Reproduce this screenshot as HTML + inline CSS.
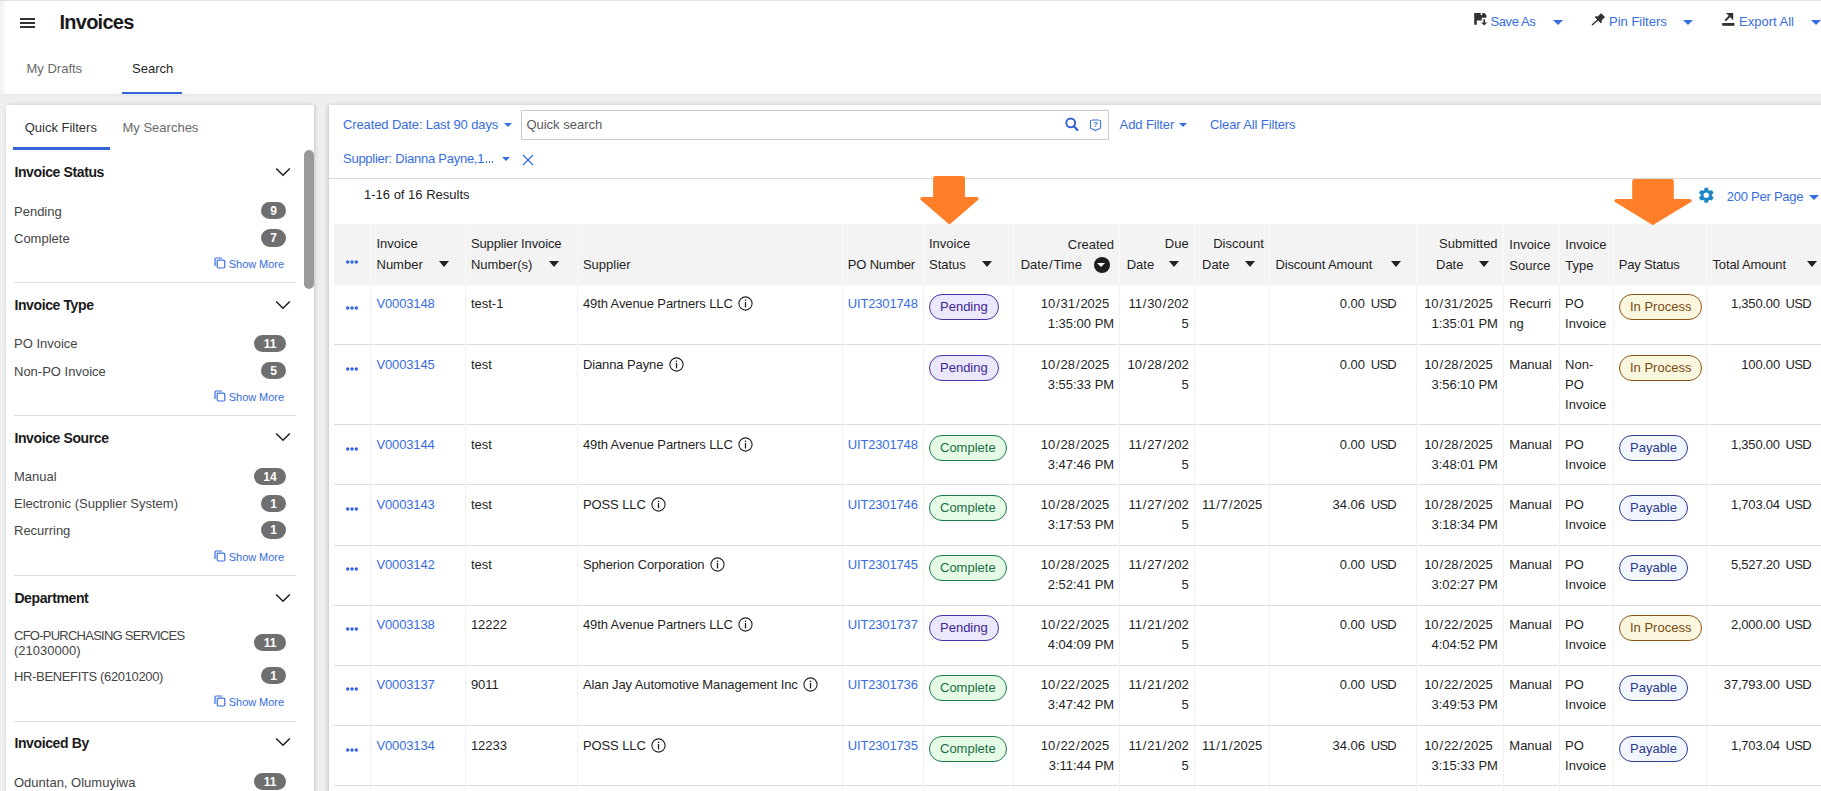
<!DOCTYPE html>
<html><head><meta charset="utf-8"><title>Invoices</title>
<style>
*{box-sizing:border-box;margin:0;padding:0}
html,body{width:1821px;height:791px;overflow:hidden;background:#fff}
body{position:relative;font-family:"Liberation Sans",sans-serif;font-size:13px;color:#1f1f1f}
.t{position:absolute;white-space:nowrap;line-height:20px}
.tri{position:absolute;width:0;height:0}
.abs{position:absolute}
.sl{margin:0 0.85px}
.badge{position:absolute;height:26px;border-radius:13px;border:1.2px solid;padding:0 10px;line-height:24px;font-size:13px;white-space:nowrap}
.pend{background:#ece8fb;border-color:#4a2fa6;color:#3e2796}
.comp{background:#e6fbe6;border-color:#1c7a4c;color:#1b6e48}
.proc{background:#fbf7df;border-color:#8a5416;color:#7a4a12}
.pay{background:#f1f5fd;border-color:#2d3b8e;color:#2d3b8e}
.cnt{position:absolute;height:17.5px;border-radius:9px;background:#6f6f6f;color:#fff;font-weight:bold;font-size:12px;line-height:19px;text-align:center}
.vl{position:absolute;width:1px}
.hl{position:absolute;height:1px}
</style></head><body>

<div class="hl" style="left:0;top:0;width:1821px;background:#e0e0e0"></div>
<div class="abs" style="left:0;top:94px;width:1821px;height:697px;background:#efefef"></div>
<div class="abs" style="left:0;top:94px;width:1821px;height:3px;background:linear-gradient(#e6e6e6,#efefef)"></div>
<div class="abs" style="left:0;top:1px;width:7px;height:790px;background:linear-gradient(90deg,#f0f0f0,rgba(255,255,255,0))"></div>
<div class="abs" style="left:20px;top:18px;width:15px;height:2px;background:#333"></div>
<div class="abs" style="left:20px;top:22px;width:15px;height:2px;background:#333"></div>
<div class="abs" style="left:20px;top:26px;width:15px;height:2px;background:#333"></div>
<div class="t " style="top:12.37px;left:59.50px;color:#1a1a1a;font-size:20px;font-weight:bold;letter-spacing:-0.75px;">Invoices</div>
<div class="t " style="top:58.50px;left:26.50px;color:#6a6a6a;">My Drafts</div>
<div class="t " style="top:58.50px;left:132.00px;color:#1f1f1f;">Search</div>
<div class="abs" style="left:122px;top:91.5px;width:60px;height:2.5px;background:#3466d8"></div>
<svg class="abs" style="left:1470px;top:8px" width="20" height="20" viewBox="0 0 20 20">
<path d="M4.2 5H14.4L16.4 7.2V9.7H11.7V12.5H6.8V16.7H4.2Z" fill="#333"/>
<rect x="10.7" y="5" width="1.6" height="2.1" fill="#fff"/>
<rect x="13.4" y="11.2" width="1.6" height="4" fill="#333"/>
<path d="M11.2 14.6H17.2L14.2 17.6Z" fill="#333"/></svg>
<div class="t " style="top:12.00px;left:1490.50px;color:#376ddf;letter-spacing:-0.4px;">Save As</div>
<div class="tri" style="left:1553px;top:20px;border-left:5.25px solid transparent;border-right:5.25px solid transparent;border-top:5px solid #376ddf;"></div>
<svg class="abs" style="left:1588px;top:8px" width="20" height="20" viewBox="0 0 20 20">
<path d="M13.2 5.2L17.2 9.2L16.2 9.8L13.6 12.4L13.9 14.6L12.8 15.2L6.8 9.2L7.4 8.2L9.6 8.5L12.2 5.9Z" fill="#333"/>
<path d="M10.2 11.6L4.4 16.8" stroke="#333" stroke-width="1.4" stroke-linecap="round"/></svg>
<div class="t " style="top:12.00px;left:1609.00px;color:#376ddf;">Pin Filters</div>
<div class="tri" style="left:1683px;top:20px;border-left:5.25px solid transparent;border-right:5.25px solid transparent;border-top:5px solid #376ddf;"></div>
<svg class="abs" style="left:1718px;top:8px" width="20" height="20" viewBox="0 0 20 20">
<rect x="4.2" y="15" width="12.2" height="2.8" fill="#333"/>
<path d="M8 5H15.2V12.2Z" fill="#333"/>
<path d="M7.2 12.6L11.6 8.2" stroke="#333" stroke-width="2"/></svg>
<div class="t " style="top:12.00px;left:1739.00px;color:#376ddf;">Export All</div>
<div class="tri" style="left:1810.5px;top:20px;border-left:5.25px solid transparent;border-right:5.25px solid transparent;border-top:5px solid #376ddf;"></div>
<div class="abs" style="left:6px;top:105px;width:308px;height:700px;background:#fff;box-shadow:1px 0 4px rgba(0,0,0,0.18)"></div>
<div class="t " style="top:117.50px;left:24.70px;color:#333;">Quick Filters</div>
<div class="t " style="top:117.50px;left:122.50px;color:#6a6a6a;">My Searches</div>
<div class="abs" style="left:13px;top:147px;width:97px;height:3px;background:#3466d8"></div>
<div class="abs" style="left:304px;top:150px;width:10px;height:138.5px;border-radius:5px;background:#9a9a9a"></div>
<div class="t " style="top:162.15px;left:14.40px;color:#1a1a1a;font-size:14px;font-weight:bold;letter-spacing:-0.38px;">Invoice Status</div>
<svg class="abs" style="left:275px;top:166.5px" width="16" height="10" viewBox="0 0 16 10"><path d="M1.2 1.5 L8 8.2 L14.8 1.5" fill="none" stroke="#222" stroke-width="1.6"/></svg>
<div class="t " style="top:202.00px;left:14.00px;color:#444;">Pending</div>
<div class="cnt" style="left:261px;top:201.95px;width:25px">9</div>
<div class="t " style="top:228.90px;left:14.00px;color:#444;">Complete</div>
<div class="cnt" style="left:261px;top:229.25px;width:25px">7</div>
<svg class="abs" style="left:214px;top:257px" width="12" height="12" viewBox="0 0 12 12"><path d="M1 9V2.2Q1 1 2.2 1H8" fill="none" stroke="#376ddf" stroke-width="1.2"/><rect x="3.2" y="3.2" width="7.6" height="7.8" rx="1.2" fill="none" stroke="#376ddf" stroke-width="1.2"/></svg>
<div class="t " style="top:254.19px;left:228.80px;color:#376ddf;font-size:11px;letter-spacing:-0.05px;">Show More</div>
<div class="hl" style="left:14px;top:282px;width:282px;background:#dedede"></div>
<div class="t " style="top:295.25px;left:14.40px;color:#1a1a1a;font-size:14px;font-weight:bold;letter-spacing:-0.38px;">Invoice Type</div>
<svg class="abs" style="left:275px;top:299.6px" width="16" height="10" viewBox="0 0 16 10"><path d="M1.2 1.5 L8 8.2 L14.8 1.5" fill="none" stroke="#222" stroke-width="1.6"/></svg>
<div class="t " style="top:334.20px;left:14.00px;color:#444;">PO Invoice</div>
<div class="cnt" style="left:254px;top:334.75px;width:32px">11</div>
<div class="t " style="top:361.50px;left:14.00px;color:#444;">Non-PO Invoice</div>
<div class="cnt" style="left:261px;top:361.75px;width:25px">5</div>
<svg class="abs" style="left:214px;top:390px" width="12" height="12" viewBox="0 0 12 12"><path d="M1 9V2.2Q1 1 2.2 1H8" fill="none" stroke="#376ddf" stroke-width="1.2"/><rect x="3.2" y="3.2" width="7.6" height="7.8" rx="1.2" fill="none" stroke="#376ddf" stroke-width="1.2"/></svg>
<div class="t " style="top:387.19px;left:228.80px;color:#376ddf;font-size:11px;letter-spacing:-0.05px;">Show More</div>
<div class="hl" style="left:14px;top:415px;width:282px;background:#dedede"></div>
<div class="t " style="top:427.75px;left:14.40px;color:#1a1a1a;font-size:14px;font-weight:bold;letter-spacing:-0.38px;">Invoice Source</div>
<svg class="abs" style="left:275px;top:432.1px" width="16" height="10" viewBox="0 0 16 10"><path d="M1.2 1.5 L8 8.2 L14.8 1.5" fill="none" stroke="#222" stroke-width="1.6"/></svg>
<div class="t " style="top:467.20px;left:14.00px;color:#444;">Manual</div>
<div class="cnt" style="left:254px;top:467.75px;width:32px">14</div>
<div class="t " style="top:494.40px;left:14.00px;color:#444;">Electronic (Supplier System)</div>
<div class="cnt" style="left:261px;top:494.75px;width:25px">1</div>
<div class="t " style="top:520.80px;left:14.00px;color:#444;">Recurring</div>
<div class="cnt" style="left:261px;top:521.25px;width:25px">1</div>
<svg class="abs" style="left:214px;top:550.2px" width="12" height="12" viewBox="0 0 12 12"><path d="M1 9V2.2Q1 1 2.2 1H8" fill="none" stroke="#376ddf" stroke-width="1.2"/><rect x="3.2" y="3.2" width="7.6" height="7.8" rx="1.2" fill="none" stroke="#376ddf" stroke-width="1.2"/></svg>
<div class="t " style="top:547.39px;left:228.80px;color:#376ddf;font-size:11px;letter-spacing:-0.05px;">Show More</div>
<div class="hl" style="left:14px;top:574.6px;width:282px;background:#dedede"></div>
<div class="t " style="top:588.15px;left:14.40px;color:#1a1a1a;font-size:14px;font-weight:bold;letter-spacing:-0.38px;">Department</div>
<svg class="abs" style="left:275px;top:592.5px" width="16" height="10" viewBox="0 0 16 10"><path d="M1.2 1.5 L8 8.2 L14.8 1.5" fill="none" stroke="#222" stroke-width="1.6"/></svg>
<div class="t " style="top:626.30px;left:14.00px;color:#444;letter-spacing:-0.75px;">CFO-PURCHASING SERVICES</div>
<div class="t " style="top:641.30px;left:14.00px;color:#444;">(21030000)</div>
<div class="cnt" style="left:254px;top:633.75px;width:32px">11</div>
<div class="t " style="top:667.10px;left:14.00px;color:#444;letter-spacing:-0.35px;">HR-BENEFITS (62010200)</div>
<div class="cnt" style="left:261px;top:666.75px;width:25px">1</div>
<svg class="abs" style="left:214px;top:695px" width="12" height="12" viewBox="0 0 12 12"><path d="M1 9V2.2Q1 1 2.2 1H8" fill="none" stroke="#376ddf" stroke-width="1.2"/><rect x="3.2" y="3.2" width="7.6" height="7.8" rx="1.2" fill="none" stroke="#376ddf" stroke-width="1.2"/></svg>
<div class="t " style="top:692.19px;left:228.80px;color:#376ddf;font-size:11px;letter-spacing:-0.05px;">Show More</div>
<div class="hl" style="left:14px;top:720.5px;width:282px;background:#dedede"></div>
<div class="t " style="top:732.85px;left:14.40px;color:#1a1a1a;font-size:14px;font-weight:bold;letter-spacing:-0.38px;">Invoiced By</div>
<svg class="abs" style="left:275px;top:737.2px" width="16" height="10" viewBox="0 0 16 10"><path d="M1.2 1.5 L8 8.2 L14.8 1.5" fill="none" stroke="#222" stroke-width="1.6"/></svg>
<div class="t " style="top:772.50px;left:14.00px;color:#444;">Oduntan, Olumuyiwa</div>
<div class="cnt" style="left:254px;top:772.75px;width:32px">11</div>
<div class="abs" style="left:329px;top:105px;width:1500px;height:700px;background:#fff;box-shadow:-1px 0 4px rgba(0,0,0,0.18)"></div>
<div class="t " style="top:114.80px;left:343.00px;color:#376ddf;letter-spacing:-0.12px;">Created Date: Last 90 days</div>
<div class="tri" style="left:503.5px;top:123px;border-left:4.0px solid transparent;border-right:4.0px solid transparent;border-top:4.5px solid #376ddf;"></div>
<div class="abs" style="left:521px;top:110px;width:588px;height:30px;border:1px solid #c9c9c9;background:#fff"></div>
<div class="t " style="top:114.80px;left:526.40px;color:#5a5a5a;">Quick search</div>
<svg class="abs" style="left:1064px;top:116px" width="15" height="16" viewBox="0 0 15 16"><circle cx="6.7" cy="6.9" r="4.4" fill="none" stroke="#2d5fd2" stroke-width="1.9"/><path d="M9.9 10.2L13.4 13.9" stroke="#2d5fd2" stroke-width="2.2" stroke-linecap="round"/></svg>
<svg class="abs" style="left:1089px;top:118.7px" width="13" height="13" viewBox="0 0 13 13"><path d="M1.4 2.4Q1.4 1.2 3 1.1Q6.5 0.8 10 1.1Q11.6 1.2 11.6 2.4V8.6Q11.6 9.4 10.6 9.8L7.2 11L6.5 11.8L5.8 11L2.4 9.8Q1.4 9.4 1.4 8.6Z" fill="none" stroke="#376ddf" stroke-width="1.05"/><text x="6.5" y="8.4" font-size="7.6" font-weight="bold" text-anchor="middle" fill="#376ddf" font-family="Liberation Sans">?</text></svg>
<div class="t " style="top:115.00px;left:1119.60px;color:#376ddf;letter-spacing:-0.1px;">Add Filter</div>
<div class="tri" style="left:1178.8px;top:122.8px;border-left:4.3px solid transparent;border-right:4.3px solid transparent;border-top:4.6px solid #376ddf;"></div>
<div class="t " style="top:115.00px;left:1210.00px;color:#376ddf;letter-spacing:-0.12px;">Clear All Filters</div>
<div class="t " style="top:148.50px;left:343.00px;color:#376ddf;letter-spacing:-0.26px;">Supplier: Dianna Payne,1</div>
<div class="abs" style="left:486px;top:161px;width:1.4px;height:1.6px;background:#376ddf"></div>
<div class="abs" style="left:489px;top:161px;width:1.4px;height:1.6px;background:#376ddf"></div>
<div class="abs" style="left:492px;top:161px;width:1.4px;height:1.6px;background:#376ddf"></div>
<div class="tri" style="left:502px;top:157px;border-left:4.0px solid transparent;border-right:4.0px solid transparent;border-top:4.5px solid #376ddf;"></div>
<svg class="abs" style="left:522px;top:154px" width="12" height="12" viewBox="0 0 12 12"><path d="M1 1L11 11M11 1L1 11" stroke="#376ddf" stroke-width="1.3"/></svg>
<div class="hl" style="left:329px;top:178px;width:1492px;background:#d9d9d9"></div>
<div class="t " style="top:185.00px;left:364.00px;color:#222;">1-16 of 16 Results</div>
<svg class="abs" style="left:1697.4px;top:186.2px" width="18.6" height="18.6" viewBox="0 0 24 24"><path fill="#1d86c6" d="M19.14 12.94c.04-.3.06-.61.06-.94 0-.32-.02-.64-.07-.94l2.03-1.58a.49.49 0 00.12-.61l-1.92-3.32a.488.488 0 00-.59-.22l-2.39.96c-.5-.38-1.03-.7-1.62-.94l-.36-2.54a.484.484 0 00-.48-.41h-3.84c-.24 0-.43.17-.47.41l-.36 2.54c-.59.24-1.13.57-1.62.94l-2.39-.96c-.22-.08-.47 0-.59.22L2.74 8.87c-.12.21-.08.47.12.61l2.03 1.58c-.05.3-.09.63-.09.94s.02.64.07.94l-2.03 1.58a.49.49 0 00-.12.61l1.92 3.32c.12.22.37.29.59.22l2.39-.96c.5.38 1.03.7 1.62.94l.36 2.54c.05.24.24.41.48.41h3.84c.24 0 .44-.17.47-.41l.36-2.54c.59-.24 1.13-.56 1.62-.94l2.39.96c.22.08.47 0 .59-.22l1.92-3.32c.12-.22.07-.47-.12-.61l-2.01-1.58zM12 15.6c-1.98 0-3.6-1.62-3.6-3.6s1.62-3.6 3.6-3.6 3.6 1.62 3.6 3.6-1.62 3.6-3.6 3.6z"/></svg>
<div class="t " style="top:186.50px;left:1726.80px;color:#376ddf;letter-spacing:-0.25px;">200 Per Page</div>
<div class="tri" style="left:1808.5px;top:195px;border-left:5.25px solid transparent;border-right:5.25px solid transparent;border-top:5px solid #376ddf;"></div>
<div class="abs" style="left:334px;top:224px;width:1487px;height:61px;background:#f3f3f3"></div>
<div class="hl" style="left:334px;top:344.0px;width:1487px;background:#dcdcdc"></div>
<div class="hl" style="left:334px;top:424.0px;width:1487px;background:#dcdcdc"></div>
<div class="hl" style="left:334px;top:484.0px;width:1487px;background:#dcdcdc"></div>
<div class="hl" style="left:334px;top:545.0px;width:1487px;background:#dcdcdc"></div>
<div class="hl" style="left:334px;top:605.0px;width:1487px;background:#dcdcdc"></div>
<div class="hl" style="left:334px;top:665.0px;width:1487px;background:#dcdcdc"></div>
<div class="hl" style="left:334px;top:725.0px;width:1487px;background:#dcdcdc"></div>
<div class="hl" style="left:334px;top:785.0px;width:1487px;background:#dcdcdc"></div>
<div class="vl" style="left:370px;top:224px;height:61px;background:#f9f9f9"></div>
<div class="vl" style="left:370px;top:285px;height:506px;background:#f1f1f1"></div>
<div class="vl" style="left:465px;top:224px;height:61px;background:#f9f9f9"></div>
<div class="vl" style="left:465px;top:285px;height:506px;background:#f1f1f1"></div>
<div class="vl" style="left:577px;top:224px;height:61px;background:#f9f9f9"></div>
<div class="vl" style="left:577px;top:285px;height:506px;background:#f1f1f1"></div>
<div class="vl" style="left:842px;top:224px;height:61px;background:#f9f9f9"></div>
<div class="vl" style="left:842px;top:285px;height:506px;background:#f1f1f1"></div>
<div class="vl" style="left:923px;top:224px;height:61px;background:#f9f9f9"></div>
<div class="vl" style="left:923px;top:285px;height:506px;background:#f1f1f1"></div>
<div class="vl" style="left:1013px;top:224px;height:61px;background:#f9f9f9"></div>
<div class="vl" style="left:1013px;top:285px;height:506px;background:#f1f1f1"></div>
<div class="vl" style="left:1119px;top:224px;height:61px;background:#f9f9f9"></div>
<div class="vl" style="left:1119px;top:285px;height:506px;background:#f1f1f1"></div>
<div class="vl" style="left:1194px;top:224px;height:61px;background:#f9f9f9"></div>
<div class="vl" style="left:1194px;top:285px;height:506px;background:#f1f1f1"></div>
<div class="vl" style="left:1269px;top:224px;height:61px;background:#f9f9f9"></div>
<div class="vl" style="left:1269px;top:285px;height:506px;background:#f1f1f1"></div>
<div class="vl" style="left:1416px;top:224px;height:61px;background:#f9f9f9"></div>
<div class="vl" style="left:1416px;top:285px;height:506px;background:#f1f1f1"></div>
<div class="vl" style="left:1503px;top:224px;height:61px;background:#f9f9f9"></div>
<div class="vl" style="left:1503px;top:285px;height:506px;background:#f1f1f1"></div>
<div class="vl" style="left:1559px;top:224px;height:61px;background:#f9f9f9"></div>
<div class="vl" style="left:1559px;top:285px;height:506px;background:#f1f1f1"></div>
<div class="vl" style="left:1613px;top:224px;height:61px;background:#f9f9f9"></div>
<div class="vl" style="left:1613px;top:285px;height:506px;background:#f1f1f1"></div>
<div class="vl" style="left:1706px;top:224px;height:61px;background:#f9f9f9"></div>
<div class="vl" style="left:1706px;top:285px;height:506px;background:#f1f1f1"></div>
<svg class="abs" style="left:345.4px;top:258.9px" width="14" height="6" viewBox="0 0 14 6"><circle cx="2.7" cy="3" r="1.75" fill="#3463dc"/><circle cx="7" cy="3" r="1.75" fill="#3463dc"/><circle cx="11.3" cy="3" r="1.75" fill="#3463dc"/></svg>
<div class="t " style="top:234.00px;left:376.50px;">Invoice</div>
<div class="t " style="top:255.00px;left:376.50px;">Number</div>
<div class="tri" style="left:438.7px;top:261px;border-left:5.25px solid transparent;border-right:5.25px solid transparent;border-top:6px solid #222;"></div>
<div class="t " style="top:234.00px;left:470.90px;letter-spacing:-0.12px;">Supplier Invoice</div>
<div class="t " style="top:255.00px;left:470.90px;">Number(s)</div>
<div class="tri" style="left:548.8px;top:261px;border-left:5.25px solid transparent;border-right:5.25px solid transparent;border-top:6px solid #222;"></div>
<div class="t " style="top:255.00px;left:582.90px;">Supplier</div>
<div class="t " style="top:255.00px;left:847.70px;letter-spacing:-0.15px;">PO Number</div>
<div class="t " style="top:234.00px;left:929.00px;">Invoice</div>
<div class="t " style="top:255.00px;left:929.00px;">Status</div>
<div class="tri" style="left:982.3px;top:261px;border-left:5.25px solid transparent;border-right:5.25px solid transparent;border-top:6px solid #222;"></div>
<div class="t " style="top:234.50px;right:707.00px;text-align:right;">Created</div>
<div class="t " style="top:255.00px;left:1020.70px;">Date<span class="sl">/</span>Time</div>
<div class="abs" style="left:1094px;top:257px;width:16px;height:16px;border-radius:8px;background:#1e1e1e"></div>
<div class="tri" style="left:1097.2px;top:262.8px;border-left:4.6px solid transparent;border-right:4.6px solid transparent;border-top:4.6px solid #fff;"></div>
<div class="t " style="top:234.00px;right:632.30px;text-align:right;">Due</div>
<div class="t " style="top:255.00px;left:1126.70px;">Date</div>
<div class="tri" style="left:1168.5px;top:261px;border-left:5.5px solid transparent;border-right:5.5px solid transparent;border-top:6px solid #222;"></div>
<div class="t " style="top:234.00px;right:557.20px;text-align:right;">Discount</div>
<div class="t " style="top:255.00px;left:1202.00px;">Date</div>
<div class="tri" style="left:1244.5px;top:261px;border-left:5.5px solid transparent;border-right:5.5px solid transparent;border-top:6px solid #222;"></div>
<div class="t " style="top:255.00px;left:1275.40px;letter-spacing:-0.1px;">Discount Amount</div>
<div class="tri" style="left:1391px;top:261px;border-left:5.5px solid transparent;border-right:5.5px solid transparent;border-top:6px solid #222;"></div>
<div class="t " style="top:234.00px;right:323.40px;text-align:right;">Submitted</div>
<div class="t " style="top:255.00px;left:1436.00px;">Date</div>
<div class="tri" style="left:1478.8px;top:261px;border-left:5.25px solid transparent;border-right:5.25px solid transparent;border-top:6px solid #222;"></div>
<div class="t " style="top:234.60px;left:1509.30px;">Invoice</div>
<div class="t " style="top:255.50px;left:1509.30px;">Source</div>
<div class="t " style="top:234.60px;left:1565.30px;">Invoice</div>
<div class="t " style="top:255.50px;left:1565.30px;">Type</div>
<div class="t " style="top:255.00px;left:1618.80px;letter-spacing:-0.2px;">Pay Status</div>
<div class="t " style="top:255.00px;left:1712.50px;letter-spacing:-0.15px;">Total Amount</div>
<div class="tri" style="left:1806.5px;top:261px;border-left:5.5px solid transparent;border-right:5.5px solid transparent;border-top:6px solid #222;"></div>
<svg class="abs" style="left:345.4px;top:304.9px" width="14" height="6" viewBox="0 0 14 6"><circle cx="2.7" cy="3" r="1.75" fill="#3463dc"/><circle cx="7" cy="3" r="1.75" fill="#3463dc"/><circle cx="11.3" cy="3" r="1.75" fill="#3463dc"/></svg>
<div class="t " style="top:294.00px;left:376.50px;color:#376ddf;letter-spacing:-0.15px;">V0003148</div>
<div class="t " style="top:294.00px;left:470.90px;">test-1</div>
<div class="t " style="top:294.00px;left:582.90px;letter-spacing:-0.1px;">49th Avenue Partners LLC<svg style="vertical-align:-3px;margin-left:5.5px" width="15" height="15" viewBox="0 0 15 15"><circle cx="7.5" cy="7.5" r="6.6" fill="none" stroke="#1f1f1f" stroke-width="1.1"/><rect x="6.85" y="3.6" width="1.3" height="1.4" fill="#1f1f1f"/><rect x="6.85" y="6" width="1.3" height="5.4" fill="#1f1f1f"/></svg></div>
<div class="t " style="top:294.00px;left:847.70px;color:#376ddf;letter-spacing:-0.15px;">UIT2301748</div>
<div class="badge pend" style="left:929px;top:294.0px">Pending</div>
<div class="t " style="top:294.00px;right:711.70px;text-align:right;">10<span class="sl">/</span>31<span class="sl">/</span>2025</div>
<div class="t " style="top:314.00px;right:706.80px;text-align:right;">1:35:00 PM</div>
<div class="t " style="top:294.00px;right:632.20px;text-align:right;">11<span class="sl">/</span>30<span class="sl">/</span>202</div>
<div class="t " style="top:314.00px;right:632.20px;text-align:right;">5</div>
<div class="t " style="top:294.00px;right:456.00px;text-align:right;">0.00</div>
<div class="t " style="top:294.00px;right:425.00px;text-align:right;letter-spacing:-0.75px;">USD</div>
<div class="t " style="top:294.00px;right:328.40px;text-align:right;">10<span class="sl">/</span>31<span class="sl">/</span>2025</div>
<div class="t " style="top:314.00px;right:323.10px;text-align:right;">1:35:01 PM</div>
<div class="t " style="top:294.00px;left:1509.30px;">Recurri</div>
<div class="t " style="top:314.00px;left:1509.30px;">ng</div>
<div class="t " style="top:294.00px;left:1565.10px;">PO</div>
<div class="t " style="top:314.00px;left:1565.10px;">Invoice</div>
<div class="badge proc" style="left:1619px;top:294.0px">In Process</div>
<div class="t " style="top:294.00px;right:41.10px;text-align:right;letter-spacing:-0.2px;">1,350.00</div>
<div class="t " style="top:294.00px;right:10.20px;text-align:right;letter-spacing:-0.75px;">USD</div>
<svg class="abs" style="left:345.4px;top:365.9px" width="14" height="6" viewBox="0 0 14 6"><circle cx="2.7" cy="3" r="1.75" fill="#3463dc"/><circle cx="7" cy="3" r="1.75" fill="#3463dc"/><circle cx="11.3" cy="3" r="1.75" fill="#3463dc"/></svg>
<div class="t " style="top:355.00px;left:376.50px;color:#376ddf;letter-spacing:-0.15px;">V0003145</div>
<div class="t " style="top:355.00px;left:470.90px;">test</div>
<div class="t " style="top:355.00px;left:582.90px;letter-spacing:-0.1px;">Dianna Payne<svg style="vertical-align:-3px;margin-left:5.5px" width="15" height="15" viewBox="0 0 15 15"><circle cx="7.5" cy="7.5" r="6.6" fill="none" stroke="#1f1f1f" stroke-width="1.1"/><rect x="6.85" y="3.6" width="1.3" height="1.4" fill="#1f1f1f"/><rect x="6.85" y="6" width="1.3" height="5.4" fill="#1f1f1f"/></svg></div>
<div class="badge pend" style="left:929px;top:355.0px">Pending</div>
<div class="t " style="top:355.00px;right:711.70px;text-align:right;">10<span class="sl">/</span>28<span class="sl">/</span>2025</div>
<div class="t " style="top:375.00px;right:706.80px;text-align:right;">3:55:33 PM</div>
<div class="t " style="top:355.00px;right:632.20px;text-align:right;">10<span class="sl">/</span>28<span class="sl">/</span>202</div>
<div class="t " style="top:375.00px;right:632.20px;text-align:right;">5</div>
<div class="t " style="top:355.00px;right:456.00px;text-align:right;">0.00</div>
<div class="t " style="top:355.00px;right:425.00px;text-align:right;letter-spacing:-0.75px;">USD</div>
<div class="t " style="top:355.00px;right:328.40px;text-align:right;">10<span class="sl">/</span>28<span class="sl">/</span>2025</div>
<div class="t " style="top:375.00px;right:323.10px;text-align:right;">3:56:10 PM</div>
<div class="t " style="top:355.00px;left:1509.30px;">Manual</div>
<div class="t " style="top:355.00px;left:1565.10px;">Non-</div>
<div class="t " style="top:375.00px;left:1565.10px;">PO</div>
<div class="t " style="top:395.00px;left:1565.10px;">Invoice</div>
<div class="badge proc" style="left:1619px;top:355.0px">In Process</div>
<div class="t " style="top:355.00px;right:41.10px;text-align:right;letter-spacing:-0.2px;">100.00</div>
<div class="t " style="top:355.00px;right:10.20px;text-align:right;letter-spacing:-0.75px;">USD</div>
<svg class="abs" style="left:345.4px;top:445.9px" width="14" height="6" viewBox="0 0 14 6"><circle cx="2.7" cy="3" r="1.75" fill="#3463dc"/><circle cx="7" cy="3" r="1.75" fill="#3463dc"/><circle cx="11.3" cy="3" r="1.75" fill="#3463dc"/></svg>
<div class="t " style="top:435.00px;left:376.50px;color:#376ddf;letter-spacing:-0.15px;">V0003144</div>
<div class="t " style="top:435.00px;left:470.90px;">test</div>
<div class="t " style="top:435.00px;left:582.90px;letter-spacing:-0.1px;">49th Avenue Partners LLC<svg style="vertical-align:-3px;margin-left:5.5px" width="15" height="15" viewBox="0 0 15 15"><circle cx="7.5" cy="7.5" r="6.6" fill="none" stroke="#1f1f1f" stroke-width="1.1"/><rect x="6.85" y="3.6" width="1.3" height="1.4" fill="#1f1f1f"/><rect x="6.85" y="6" width="1.3" height="5.4" fill="#1f1f1f"/></svg></div>
<div class="t " style="top:435.00px;left:847.70px;color:#376ddf;letter-spacing:-0.15px;">UIT2301748</div>
<div class="badge comp" style="left:929px;top:435.0px">Complete</div>
<div class="t " style="top:435.00px;right:711.70px;text-align:right;">10<span class="sl">/</span>28<span class="sl">/</span>2025</div>
<div class="t " style="top:455.00px;right:706.80px;text-align:right;">3:47:46 PM</div>
<div class="t " style="top:435.00px;right:632.20px;text-align:right;">11<span class="sl">/</span>27<span class="sl">/</span>202</div>
<div class="t " style="top:455.00px;right:632.20px;text-align:right;">5</div>
<div class="t " style="top:435.00px;right:456.00px;text-align:right;">0.00</div>
<div class="t " style="top:435.00px;right:425.00px;text-align:right;letter-spacing:-0.75px;">USD</div>
<div class="t " style="top:435.00px;right:328.40px;text-align:right;">10<span class="sl">/</span>28<span class="sl">/</span>2025</div>
<div class="t " style="top:455.00px;right:323.10px;text-align:right;">3:48:01 PM</div>
<div class="t " style="top:435.00px;left:1509.30px;">Manual</div>
<div class="t " style="top:435.00px;left:1565.10px;">PO</div>
<div class="t " style="top:455.00px;left:1565.10px;">Invoice</div>
<div class="badge pay" style="left:1619px;top:435.0px">Payable</div>
<div class="t " style="top:435.00px;right:41.10px;text-align:right;letter-spacing:-0.2px;">1,350.00</div>
<div class="t " style="top:435.00px;right:10.20px;text-align:right;letter-spacing:-0.75px;">USD</div>
<svg class="abs" style="left:345.4px;top:505.9px" width="14" height="6" viewBox="0 0 14 6"><circle cx="2.7" cy="3" r="1.75" fill="#3463dc"/><circle cx="7" cy="3" r="1.75" fill="#3463dc"/><circle cx="11.3" cy="3" r="1.75" fill="#3463dc"/></svg>
<div class="t " style="top:495.00px;left:376.50px;color:#376ddf;letter-spacing:-0.15px;">V0003143</div>
<div class="t " style="top:495.00px;left:470.90px;">test</div>
<div class="t " style="top:495.00px;left:582.90px;letter-spacing:-0.1px;">POSS LLC<svg style="vertical-align:-3px;margin-left:5.5px" width="15" height="15" viewBox="0 0 15 15"><circle cx="7.5" cy="7.5" r="6.6" fill="none" stroke="#1f1f1f" stroke-width="1.1"/><rect x="6.85" y="3.6" width="1.3" height="1.4" fill="#1f1f1f"/><rect x="6.85" y="6" width="1.3" height="5.4" fill="#1f1f1f"/></svg></div>
<div class="t " style="top:495.00px;left:847.70px;color:#376ddf;letter-spacing:-0.15px;">UIT2301746</div>
<div class="badge comp" style="left:929px;top:495.0px">Complete</div>
<div class="t " style="top:495.00px;right:711.70px;text-align:right;">10<span class="sl">/</span>28<span class="sl">/</span>2025</div>
<div class="t " style="top:515.00px;right:706.80px;text-align:right;">3:17:53 PM</div>
<div class="t " style="top:495.00px;right:632.20px;text-align:right;">11<span class="sl">/</span>27<span class="sl">/</span>202</div>
<div class="t " style="top:515.00px;right:632.20px;text-align:right;">5</div>
<div class="t " style="top:495.00px;left:1202.00px;">11<span class="sl">/</span>7<span class="sl">/</span>2025</div>
<div class="t " style="top:495.00px;right:456.00px;text-align:right;">34.06</div>
<div class="t " style="top:495.00px;right:425.00px;text-align:right;letter-spacing:-0.75px;">USD</div>
<div class="t " style="top:495.00px;right:328.40px;text-align:right;">10<span class="sl">/</span>28<span class="sl">/</span>2025</div>
<div class="t " style="top:515.00px;right:323.10px;text-align:right;">3:18:34 PM</div>
<div class="t " style="top:495.00px;left:1509.30px;">Manual</div>
<div class="t " style="top:495.00px;left:1565.10px;">PO</div>
<div class="t " style="top:515.00px;left:1565.10px;">Invoice</div>
<div class="badge pay" style="left:1619px;top:495.0px">Payable</div>
<div class="t " style="top:495.00px;right:41.10px;text-align:right;letter-spacing:-0.2px;">1,703.04</div>
<div class="t " style="top:495.00px;right:10.20px;text-align:right;letter-spacing:-0.75px;">USD</div>
<svg class="abs" style="left:345.4px;top:565.9px" width="14" height="6" viewBox="0 0 14 6"><circle cx="2.7" cy="3" r="1.75" fill="#3463dc"/><circle cx="7" cy="3" r="1.75" fill="#3463dc"/><circle cx="11.3" cy="3" r="1.75" fill="#3463dc"/></svg>
<div class="t " style="top:555.00px;left:376.50px;color:#376ddf;letter-spacing:-0.15px;">V0003142</div>
<div class="t " style="top:555.00px;left:470.90px;">test</div>
<div class="t " style="top:555.00px;left:582.90px;letter-spacing:-0.1px;">Spherion Corporation<svg style="vertical-align:-3px;margin-left:5.5px" width="15" height="15" viewBox="0 0 15 15"><circle cx="7.5" cy="7.5" r="6.6" fill="none" stroke="#1f1f1f" stroke-width="1.1"/><rect x="6.85" y="3.6" width="1.3" height="1.4" fill="#1f1f1f"/><rect x="6.85" y="6" width="1.3" height="5.4" fill="#1f1f1f"/></svg></div>
<div class="t " style="top:555.00px;left:847.70px;color:#376ddf;letter-spacing:-0.15px;">UIT2301745</div>
<div class="badge comp" style="left:929px;top:555.0px">Complete</div>
<div class="t " style="top:555.00px;right:711.70px;text-align:right;">10<span class="sl">/</span>28<span class="sl">/</span>2025</div>
<div class="t " style="top:575.00px;right:706.80px;text-align:right;">2:52:41 PM</div>
<div class="t " style="top:555.00px;right:632.20px;text-align:right;">11<span class="sl">/</span>27<span class="sl">/</span>202</div>
<div class="t " style="top:575.00px;right:632.20px;text-align:right;">5</div>
<div class="t " style="top:555.00px;right:456.00px;text-align:right;">0.00</div>
<div class="t " style="top:555.00px;right:425.00px;text-align:right;letter-spacing:-0.75px;">USD</div>
<div class="t " style="top:555.00px;right:328.40px;text-align:right;">10<span class="sl">/</span>28<span class="sl">/</span>2025</div>
<div class="t " style="top:575.00px;right:323.10px;text-align:right;">3:02:27 PM</div>
<div class="t " style="top:555.00px;left:1509.30px;">Manual</div>
<div class="t " style="top:555.00px;left:1565.10px;">PO</div>
<div class="t " style="top:575.00px;left:1565.10px;">Invoice</div>
<div class="badge pay" style="left:1619px;top:555.0px">Payable</div>
<div class="t " style="top:555.00px;right:41.10px;text-align:right;letter-spacing:-0.2px;">5,527.20</div>
<div class="t " style="top:555.00px;right:10.20px;text-align:right;letter-spacing:-0.75px;">USD</div>
<svg class="abs" style="left:345.4px;top:625.9px" width="14" height="6" viewBox="0 0 14 6"><circle cx="2.7" cy="3" r="1.75" fill="#3463dc"/><circle cx="7" cy="3" r="1.75" fill="#3463dc"/><circle cx="11.3" cy="3" r="1.75" fill="#3463dc"/></svg>
<div class="t " style="top:615.00px;left:376.50px;color:#376ddf;letter-spacing:-0.15px;">V0003138</div>
<div class="t " style="top:615.00px;left:470.90px;">12222</div>
<div class="t " style="top:615.00px;left:582.90px;letter-spacing:-0.1px;">49th Avenue Partners LLC<svg style="vertical-align:-3px;margin-left:5.5px" width="15" height="15" viewBox="0 0 15 15"><circle cx="7.5" cy="7.5" r="6.6" fill="none" stroke="#1f1f1f" stroke-width="1.1"/><rect x="6.85" y="3.6" width="1.3" height="1.4" fill="#1f1f1f"/><rect x="6.85" y="6" width="1.3" height="5.4" fill="#1f1f1f"/></svg></div>
<div class="t " style="top:615.00px;left:847.70px;color:#376ddf;letter-spacing:-0.15px;">UIT2301737</div>
<div class="badge pend" style="left:929px;top:615.0px">Pending</div>
<div class="t " style="top:615.00px;right:711.70px;text-align:right;">10<span class="sl">/</span>22<span class="sl">/</span>2025</div>
<div class="t " style="top:635.00px;right:706.80px;text-align:right;">4:04:09 PM</div>
<div class="t " style="top:615.00px;right:632.20px;text-align:right;">11<span class="sl">/</span>21<span class="sl">/</span>202</div>
<div class="t " style="top:635.00px;right:632.20px;text-align:right;">5</div>
<div class="t " style="top:615.00px;right:456.00px;text-align:right;">0.00</div>
<div class="t " style="top:615.00px;right:425.00px;text-align:right;letter-spacing:-0.75px;">USD</div>
<div class="t " style="top:615.00px;right:328.40px;text-align:right;">10<span class="sl">/</span>22<span class="sl">/</span>2025</div>
<div class="t " style="top:635.00px;right:323.10px;text-align:right;">4:04:52 PM</div>
<div class="t " style="top:615.00px;left:1509.30px;">Manual</div>
<div class="t " style="top:615.00px;left:1565.10px;">PO</div>
<div class="t " style="top:635.00px;left:1565.10px;">Invoice</div>
<div class="badge proc" style="left:1619px;top:615.0px">In Process</div>
<div class="t " style="top:615.00px;right:41.10px;text-align:right;letter-spacing:-0.2px;">2,000.00</div>
<div class="t " style="top:615.00px;right:10.20px;text-align:right;letter-spacing:-0.75px;">USD</div>
<svg class="abs" style="left:345.4px;top:685.9px" width="14" height="6" viewBox="0 0 14 6"><circle cx="2.7" cy="3" r="1.75" fill="#3463dc"/><circle cx="7" cy="3" r="1.75" fill="#3463dc"/><circle cx="11.3" cy="3" r="1.75" fill="#3463dc"/></svg>
<div class="t " style="top:675.00px;left:376.50px;color:#376ddf;letter-spacing:-0.15px;">V0003137</div>
<div class="t " style="top:675.00px;left:470.90px;">9011</div>
<div class="t " style="top:675.00px;left:582.90px;letter-spacing:-0.1px;">Alan Jay Automotive Management Inc<svg style="vertical-align:-3px;margin-left:5.5px" width="15" height="15" viewBox="0 0 15 15"><circle cx="7.5" cy="7.5" r="6.6" fill="none" stroke="#1f1f1f" stroke-width="1.1"/><rect x="6.85" y="3.6" width="1.3" height="1.4" fill="#1f1f1f"/><rect x="6.85" y="6" width="1.3" height="5.4" fill="#1f1f1f"/></svg></div>
<div class="t " style="top:675.00px;left:847.70px;color:#376ddf;letter-spacing:-0.15px;">UIT2301736</div>
<div class="badge comp" style="left:929px;top:675.0px">Complete</div>
<div class="t " style="top:675.00px;right:711.70px;text-align:right;">10<span class="sl">/</span>22<span class="sl">/</span>2025</div>
<div class="t " style="top:695.00px;right:706.80px;text-align:right;">3:47:42 PM</div>
<div class="t " style="top:675.00px;right:632.20px;text-align:right;">11<span class="sl">/</span>21<span class="sl">/</span>202</div>
<div class="t " style="top:695.00px;right:632.20px;text-align:right;">5</div>
<div class="t " style="top:675.00px;right:456.00px;text-align:right;">0.00</div>
<div class="t " style="top:675.00px;right:425.00px;text-align:right;letter-spacing:-0.75px;">USD</div>
<div class="t " style="top:675.00px;right:328.40px;text-align:right;">10<span class="sl">/</span>22<span class="sl">/</span>2025</div>
<div class="t " style="top:695.00px;right:323.10px;text-align:right;">3:49:53 PM</div>
<div class="t " style="top:675.00px;left:1509.30px;">Manual</div>
<div class="t " style="top:675.00px;left:1565.10px;">PO</div>
<div class="t " style="top:695.00px;left:1565.10px;">Invoice</div>
<div class="badge pay" style="left:1619px;top:675.0px">Payable</div>
<div class="t " style="top:675.00px;right:41.10px;text-align:right;letter-spacing:-0.2px;">37,793.00</div>
<div class="t " style="top:675.00px;right:10.20px;text-align:right;letter-spacing:-0.75px;">USD</div>
<svg class="abs" style="left:345.4px;top:746.9px" width="14" height="6" viewBox="0 0 14 6"><circle cx="2.7" cy="3" r="1.75" fill="#3463dc"/><circle cx="7" cy="3" r="1.75" fill="#3463dc"/><circle cx="11.3" cy="3" r="1.75" fill="#3463dc"/></svg>
<div class="t " style="top:736.00px;left:376.50px;color:#376ddf;letter-spacing:-0.15px;">V0003134</div>
<div class="t " style="top:736.00px;left:470.90px;">12233</div>
<div class="t " style="top:736.00px;left:582.90px;letter-spacing:-0.1px;">POSS LLC<svg style="vertical-align:-3px;margin-left:5.5px" width="15" height="15" viewBox="0 0 15 15"><circle cx="7.5" cy="7.5" r="6.6" fill="none" stroke="#1f1f1f" stroke-width="1.1"/><rect x="6.85" y="3.6" width="1.3" height="1.4" fill="#1f1f1f"/><rect x="6.85" y="6" width="1.3" height="5.4" fill="#1f1f1f"/></svg></div>
<div class="t " style="top:736.00px;left:847.70px;color:#376ddf;letter-spacing:-0.15px;">UIT2301735</div>
<div class="badge comp" style="left:929px;top:736.0px">Complete</div>
<div class="t " style="top:736.00px;right:711.70px;text-align:right;">10<span class="sl">/</span>22<span class="sl">/</span>2025</div>
<div class="t " style="top:756.00px;right:706.80px;text-align:right;">3:11:44 PM</div>
<div class="t " style="top:736.00px;right:632.20px;text-align:right;">11<span class="sl">/</span>21<span class="sl">/</span>202</div>
<div class="t " style="top:756.00px;right:632.20px;text-align:right;">5</div>
<div class="t " style="top:736.00px;left:1202.00px;">11<span class="sl">/</span>1<span class="sl">/</span>2025</div>
<div class="t " style="top:736.00px;right:456.00px;text-align:right;">34.06</div>
<div class="t " style="top:736.00px;right:425.00px;text-align:right;letter-spacing:-0.75px;">USD</div>
<div class="t " style="top:736.00px;right:328.40px;text-align:right;">10<span class="sl">/</span>22<span class="sl">/</span>2025</div>
<div class="t " style="top:756.00px;right:323.10px;text-align:right;">3:15:33 PM</div>
<div class="t " style="top:736.00px;left:1509.30px;">Manual</div>
<div class="t " style="top:736.00px;left:1565.10px;">PO</div>
<div class="t " style="top:756.00px;left:1565.10px;">Invoice</div>
<div class="badge pay" style="left:1619px;top:736.0px">Payable</div>
<div class="t " style="top:736.00px;right:41.10px;text-align:right;letter-spacing:-0.2px;">1,703.04</div>
<div class="t " style="top:736.00px;right:10.20px;text-align:right;letter-spacing:-0.75px;">USD</div>
<svg class="abs" style="left:0;top:0" width="1821" height="791"><path d="M933.1 178.1 Q933.1 176.1 935.1 176.1 H963 Q965 176.1 965 178.1 V196.9 H977 Q980 198.4 978 199.9 L950.4 223.7 Q949.4 224.7 948.4 223.7 L920.9 199.9 Q918.9 198.4 921.9 196.9 H933.1 Z" fill="#fe7f27"/></svg>
<svg class="abs" style="left:0;top:0" width="1821" height="791"><path d="M1632.2 181.1 Q1632.2 179.1 1634.2 179.1 H1671.8 Q1673.8 179.1 1673.8 181.1 V199.1 H1690 Q1693 200.6 1691 202.1 L1653.8 224.5 Q1652.8 225.5 1651.8 224.5 L1615 202.1 Q1613 200.6 1616 199.1 H1632.2 Z" fill="#fe7f27"/></svg>
</body></html>
